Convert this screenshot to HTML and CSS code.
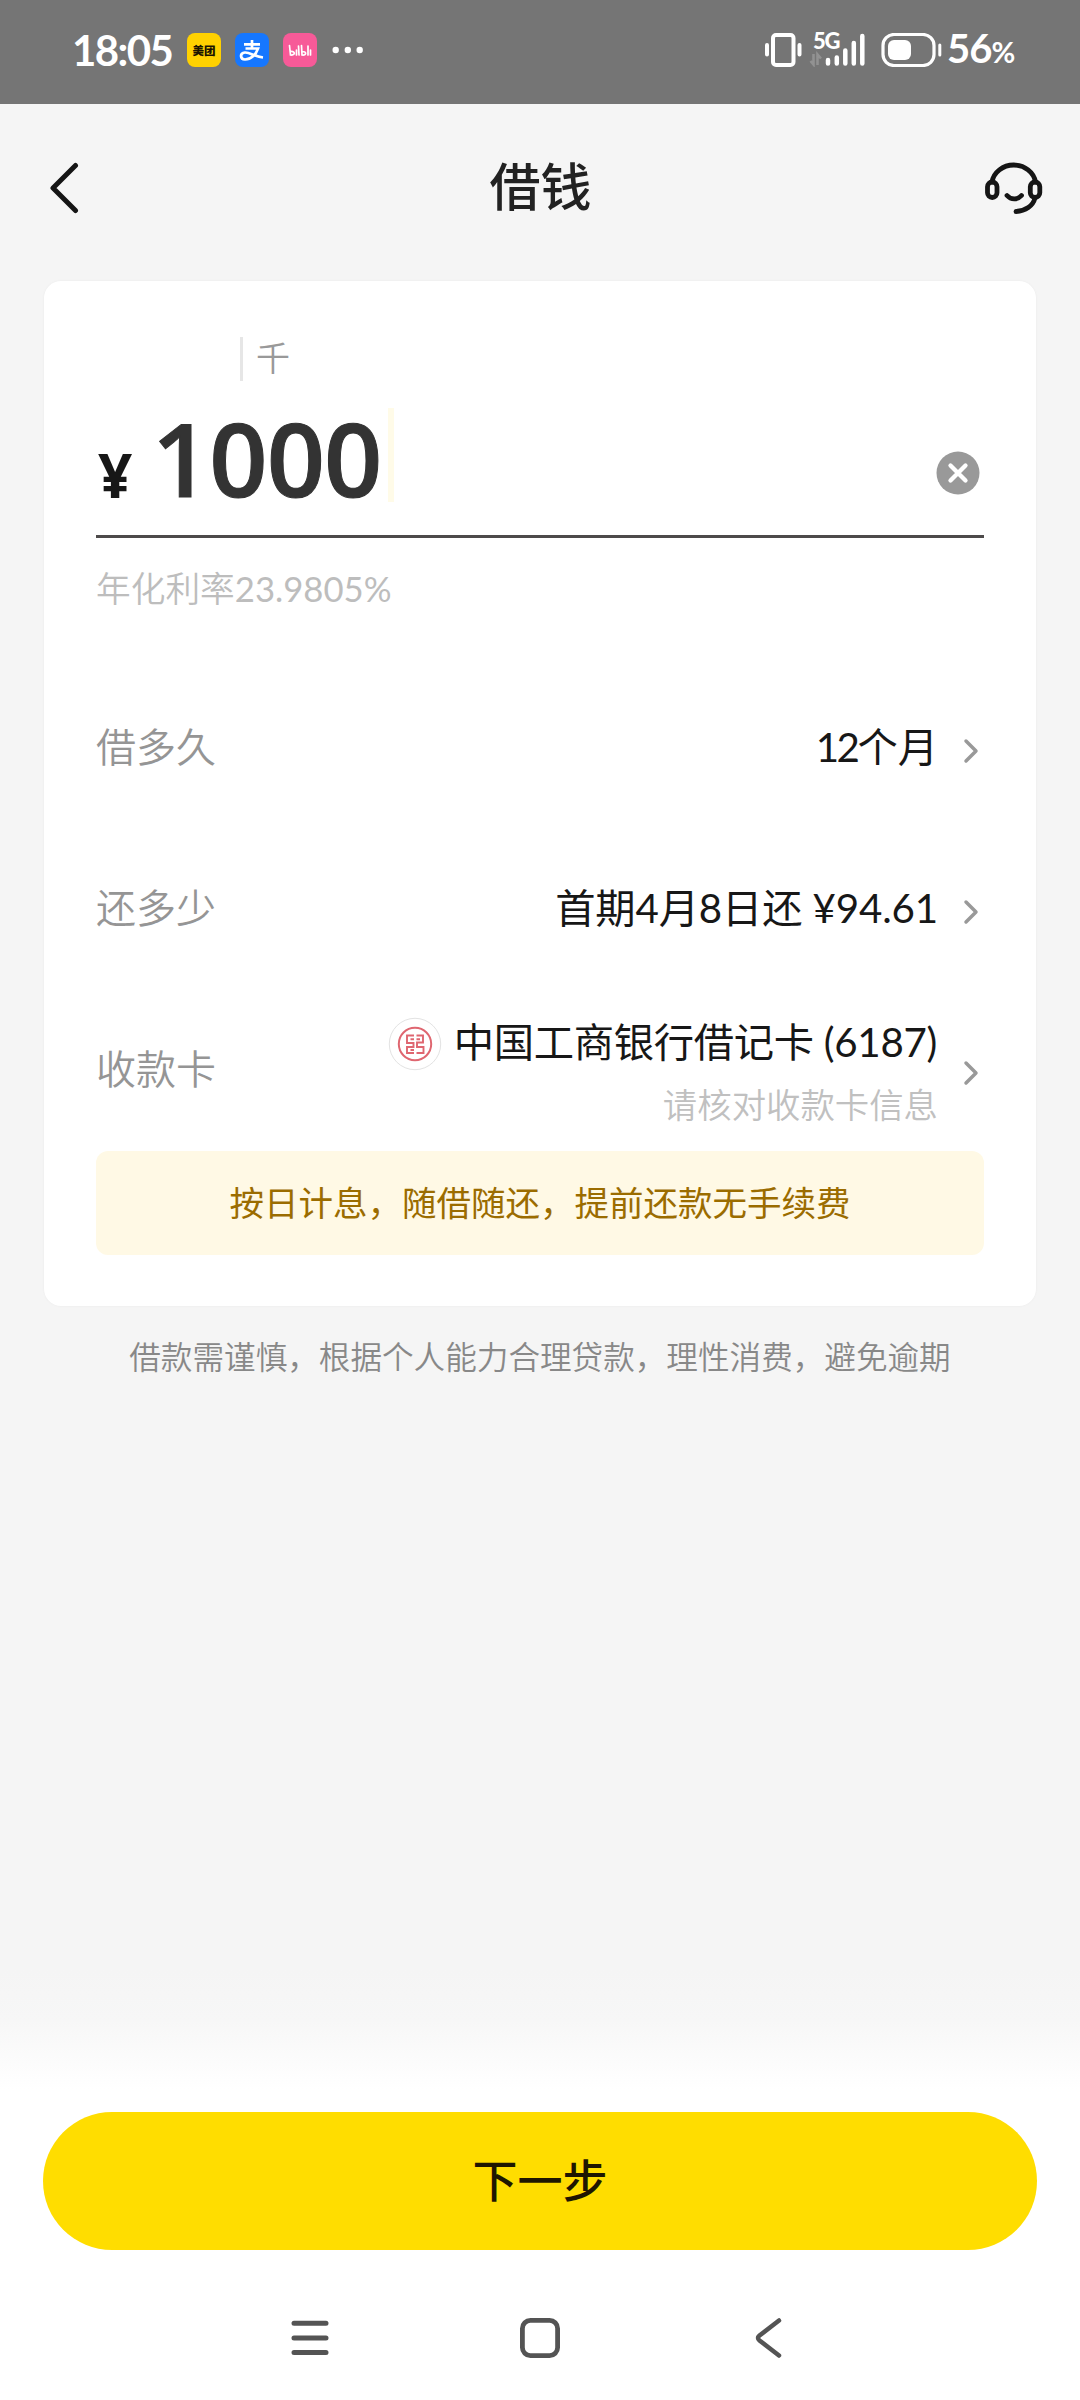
FILE: index.html
```html
<!DOCTYPE html>
<html lang="zh-CN">
<head>
<meta charset="utf-8">
<title>借钱</title>
<link rel="stylesheet" href="styles.css">
</head>
<body>
<div class="screen">
  <header class="status">
    <span class="clock">18:05</span>
    <span class="app app-mt">美团</span>
    <span class="app app-zfb">
      <svg width="34" height="34" viewBox="0 0 34 34" fill="none" stroke="#fff" stroke-width="2.7">
        <path d="M9 11.300h16M17 7v8M10.500 15.500h12.500C21 21.500 16 26.500 10 26.500C5 26.500 4.500 20 9.800 19.500C15 19 19 23.500 28 24.500"/>
      </svg>
    </span>
    <span class="app app-bili">
      <svg width="34" height="34" viewBox="0 0 34 34" fill="none" stroke="#fff" stroke-width="1.700" stroke-linecap="round">
        <path d="M6.500 12.500l1 9.500c5 .5 5-4 .5-3.500M13.500 17v5M15.500 13l.5 9M18.500 12.500l.5 9.500c4.500 .5 5-3.500 .5-3.500M25 13v9M27.500 17v5"/>
      </svg>
    </span>
    <svg class="more" width="32" height="8" viewBox="0 0 32 8" fill="#fff"><circle cx="4.700" cy="4" r="3.200"/><circle cx="16.800" cy="4" r="3.200"/><circle cx="28.700" cy="4" r="3.200"/></svg>
    <span class="spacer"></span>
    <svg class="vibrate" width="37" height="34" viewBox="0 0 37 34" fill="none" stroke="#fff">
      <rect x="8" y="2" width="20.500" height="30" rx="3" stroke-width="4"/>
      <path d="M2 12v9.500M34.500 12v9.500" stroke-width="4" stroke-linecap="round"/>
    </svg>
    <span class="signal">
      <svg width="56" height="34" viewBox="0 0 56 34" fill="none">
        <path d="M19 27v3.500M27.800 24.500v6M36.300 17.500v13M44.800 10v20.500M53.300 3v27.500" stroke="#fff" stroke-width="4.500" stroke-linecap="round"/>
        <path d="M4.500 21v10.500l-3-3.500M8.500 32V21.500l3.500 4" stroke="#929292" stroke-width="2.600"/>
      </svg>
      <span class="net">5G</span>
    </span>
    <svg class="battery" width="62" height="34" viewBox="0 0 62 34">
      <rect x="2" y="1.500" width="51" height="31" rx="11" fill="none" stroke="#fff" stroke-width="3.200"/>
      <rect x="7" y="7" width="23" height="20" rx="6" fill="#fff"/>
      <path d="M58.800 12v10" stroke="#fff" stroke-width="3" stroke-linecap="round"/>
    </svg>
    <span class="percent">56<small>%</small></span>
  </header>

  <nav class="titlebar">
    <svg width="32" height="52" viewBox="0 0 32 52" fill="none" stroke="#151515" stroke-width="5" stroke-linecap="round" stroke-linejoin="round"><path d="M27.500 3.500L5 26L27.500 48.500"/></svg>
    <h1 class="title">借钱</h1>
    <svg width="60" height="56" viewBox="0 0 60 56" fill="none" stroke="#151515" stroke-width="4.800" stroke-linecap="round">
      <path d="M8 22a22 20 0 0 1 43.500 0M51 38c-2 8-9.500 13-19 13.500"/>
      <rect x="3.500" y="22" width="9.500" height="15.500" rx="4.700"/>
      <rect x="46.300" y="22" width="9.500" height="15.500" rx="4.700"/>
      <path d="M23 35.500c4 4.500 10.500 4.500 14.500 0"/>
    </svg>
  </nav>

  <main class="card">
    <div class="unit"><span>千</span></div>
    <div class="amount">
      <span class="yen">¥</span>
      <span class="number">1000</span>
      <i class="caret"></i>
      <svg class="clear" width="44" height="44" viewBox="0 0 44 44"><circle cx="22" cy="22" r="21.500" fill="#999"/><path d="M14.500 14.500l15 15M29.500 14.500l-15 15" stroke="#fff" stroke-width="4.300" stroke-linecap="round"/></svg>
    </div>
    <p class="rate">年化利率<span class="rate-num">23.9805%</span></p>

    <div class="row">
      <span class="label">借多久</span>
      <span class="value"><span class="months">12</span>个月</span>
      <svg class="chev" width="18" height="28" viewBox="0 0 18 28"><path d="M4 4l10 10L4 24"/></svg>
    </div>
    <div class="row">
      <span class="label">还多少</span>
      <span class="value due">首期4月8日还 ¥94.61</span>
      <svg class="chev" width="18" height="28" viewBox="0 0 18 28"><path d="M4 4l10 10L4 24"/></svg>
    </div>
    <div class="row">
      <span class="label">收款卡</span>
      <div class="bank">
        <div class="bank-main">
          <svg width="54" height="54" viewBox="0 0 54 54" fill="none" stroke="#df6670">
            <circle cx="27" cy="27" r="25.700" stroke="#e3e3e3" stroke-width="1"/>
            <circle cx="27" cy="27" r="16.200" stroke-width="2"/>
            <path d="M26 18.500h-7v7.500h6.500v4h-6.500v6H26M28.500 18.500h6.500v7h-6v4.500h6.500v6h-7M22.500 22.300h3.500M28.500 22.300h3.500M22.500 33h3.500" stroke-width="1.900"/>
          </svg>
          <span class="value card-name">中国工商银行借记卡 (6187)</span>
        </div>
        <span class="hint">请核对收款卡信息</span>
      </div>
      <svg class="chev" width="18" height="28" viewBox="0 0 18 28"><path d="M4 4l10 10L4 24"/></svg>
    </div>
    <div class="notice">按日计息，随借随还，提前还款无手续费</div>
  </main>
  <p class="disclaimer">借款需谨慎，根据个人能力合理贷款，理性消费，避免逾期</p>

  <footer class="footer">
    <button class="next">下一步</button>
    <div class="sysnav">
      <svg width="44" height="44" viewBox="0 0 44 44" fill="none" stroke="#545454" stroke-width="5" stroke-linecap="round"><path d="M6 7.300h32M6 22h32M6 36.600h32"/></svg>
      <svg width="44" height="44" viewBox="0 0 44 44" fill="none" stroke="#545454" stroke-width="4.800"><rect x="4.400" y="4.400" width="35.200" height="35.200" rx="8"/></svg>
      <svg width="44" height="44" viewBox="0 0 44 44" fill="none" stroke="#545454" stroke-width="4.500" stroke-linecap="round"><path d="M32 4.500L12.500 19.500Q9.500 22 12.500 24.500L32 39.500"/></svg>
    </div>
  </footer>
</div>
</body>
</html>
```
FILE: styles.css
```css
* { box-sizing: border-box; }
body { margin: 0; }
.screen {
  width: 1080px;
  height: 2400px;
  display: flex;
  flex-direction: column;
  background: #f5f5f5;
  color: #171717;
  font-family: Lato, "Noto Sans CJK SC", sans-serif;
  overflow: hidden;
  white-space: nowrap;
}
svg { display: block; flex: none; }

.status {
  height: 104px;
  padding: 0 63px 4px 72px;
  display: flex;
  align-items: center;
  background: #757575;
  color: #fff;
}
.clock { width: 115px; font-size: 42px; font-weight: 700; letter-spacing: -1.6px; line-height: 50px; }
.app {
  width: 34px;
  height: 34px;
  margin-right: 14px;
  border-radius: 8px;
  display: flex;
  align-items: center;
  justify-content: center;
  overflow: hidden;
}
.app-mt { background: #ffd100; color: #1a1400; font-size: 11.5px; font-weight: 900; }
.app-zfb { background: #1677ff; }
.app-bili { background: #f75a98; }
.spacer { flex: 1; }
.vibrate { margin-right: 7px; }
.signal { position: relative; margin-right: 16px; }
.net { position: absolute; left: 4px; top: -4px; font-size: 22px; line-height: 24px; font-weight: 900; letter-spacing: -1.3px; }
.battery { margin-right: 4px; }
.percent { width: 70px; font-size: 40px; font-weight: 700; letter-spacing: -1px; line-height: 50px; }
.percent small { font-size: 29px; }

.titlebar {
  height: 177px;
  padding: 4px 36px 13px 48px;
  display: flex;
  align-items: center;
  justify-content: space-between;
}
.title { margin: 0 0 2px 17px; font-size: 51px; line-height: 60px; font-weight: 500; color: #222; }

.card {
  width: 992px;
  height: 1025px;
  margin: 0 44px;
  padding: 52px 52px 0;
  border-radius: 17px;
  background: #fff;
  box-shadow: 0 0 2px #e8e8e8;
}
.unit { height: 52px; padding-left: 144px; display: flex; }
.unit span {
  height: 44px;
  margin-top: 4px;
  padding-left: 13px;
  border-left: 3px solid #e6e6e6;
  font-size: 34px;
  line-height: 41px;
  font-weight: 350;
  color: #999;
}
.amount {
  height: 153px;
  display: flex;
  align-items: flex-start;
  border-bottom: 3px solid #4d4a4a;
  font-family: "Open Sans", sans-serif;
}
.yen { width: 54px; margin: 60px 0 0 2px; font-size: 60px; line-height: 60px; font-weight: 700; }
.number { width: 236px; margin-top: 22px; font-size: 102px; line-height: 102px; font-weight: 600; letter-spacing: -1px; color: #333; -webkit-text-stroke: 1px #333; }
.caret { width: 6px; height: 94px; margin-top: 23px; background: #fffbe8; }
.clear { margin: 66px 4px 0 auto; }
.rate { margin: 26px 0 54px; height: 50px; font-size: 34.700px; line-height: 50px; font-weight: 350; color: #bdbdbd; }
.rate-num { font-weight: 400; }

.row { height: 161.300px; display: flex; align-items: center; }
.label { font-size: 40px; line-height: 56px; font-weight: 350; color: #959595; padding-bottom: 4px; margin-right: auto; }
.value { font-size: 40.300px; line-height: 56px; padding-bottom: 4px; }
.months { letter-spacing: -2.500px; }
.due { letter-spacing: -0.150px; }
.card-name { margin-right: 1px; letter-spacing: -0.300px; }
.chev { margin: 4px 4px 0 24px; fill: none; stroke: #999; stroke-width: 3.500px; stroke-linecap: round; stroke-linejoin: round; }
.bank { display: flex; flex-direction: column; align-items: flex-end; }
.bank-main { height: 60px; display: flex; align-items: center; gap: 12px; }
.hint { height: 54px; padding-top: 6px; font-size: 34.400px; line-height: 50px; font-weight: 350; color: #c0c0c0; }
.notice {
  height: 104px;
  margin-top: -1px;
  border-radius: 12px;
  background: #fff9e5;
  color: #9b6c00;
  font-size: 34.500px;
  line-height: 103px;
  text-align: center;
}
.disclaimer { margin: 26px 0 0; font-size: 31.600px; line-height: 50px; font-weight: 350; text-align: center; color: #888; }

.footer {
  height: 430px;
  margin-top: auto;
  padding: 142px 43px 0;
  background: linear-gradient(#f5f5f5 0, #f7f7f7 50px, #fff 120px);
}
.next {
  display: block;
  width: 994px;
  height: 138px;
  padding: 0 0 4px;
  border: 0;
  border-radius: 69px;
  background: #fd0;
  color: #1f1600;
  font: 500 45px/60px "Noto Sans CJK SC", sans-serif;
}
.sysnav { height: 150px; padding: 66px 246px 0 245px; display: flex; justify-content: space-between; }
```
